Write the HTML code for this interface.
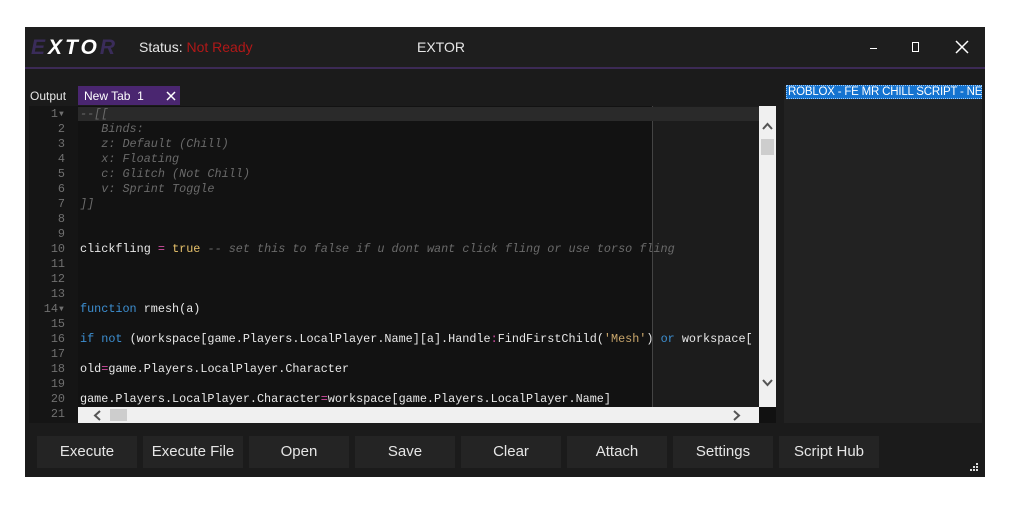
<!DOCTYPE html>
<html><head><style>
*{margin:0;padding:0;box-sizing:border-box}
body{width:1020px;height:523px;background:#fff;position:relative;overflow:hidden;font-family:"Liberation Sans",sans-serif}
.win{position:absolute;left:25px;top:27px;width:960px;height:450px;background:#1b1b1b}
.a{position:absolute}
.code{font-family:"Liberation Mono",monospace;font-size:11.8px;line-height:15px;white-space:pre;color:#e8e8e8}
.ln{position:absolute;left:0;width:40px;text-align:right;color:#707070}
.c{color:#6a6a6a;font-style:italic}
.k{color:#3d8fd1}
.t{color:#e6c06a}
.o{color:#d04ea0}
.s{color:#c9a66b}
.btn{position:absolute;top:409px;height:32px;width:100px;background:#242424;color:#e6e6e6;font-size:15px;text-align:center;line-height:32px}
</style></head><body>
<div class="win">
  <div class="a" style="left:0;top:0;width:960px;height:41px;background:#1e1e1e"></div>
  <div class="a" style="left:0;top:40px;width:960px;height:2px;background:#3c2a55"></div>
  <div class="a" style="left:6px;top:9px;font-size:21px;font-weight:bold;font-style:italic;letter-spacing:3px;color:#fff"><span style="color:#3a2c5a">E</span>XTO<span style="color:#3a2c5a">R</span></div>
  <div class="a" style="left:114px;top:12px;font-size:14px;color:#e6e6e6">Status: <span style="color:#b01818">Not Ready</span></div>
  <div class="a" style="left:392px;top:12px;font-size:14px;color:#e6e6e6">EXTOR</div>
  <div class="a" style="left:845px;top:21px;width:7px;height:1px;background:#fff"></div>
  <div class="a" style="left:887px;top:15px;width:7px;height:10px;border:1.5px solid #fff"></div>
  <svg class="a" style="left:930px;top:13px" width="14" height="14"><path d="M1 1L13 13M13 1L1 13" stroke="#fff" stroke-width="1.5"/></svg>

  <div class="a" style="left:5px;top:62px;font-size:12px;color:#e6e6e6">Output</div>
  <div class="a" style="left:53px;top:59px;width:102px;height:19px;background:#4a2670"></div>
  <div class="a" style="left:59px;top:62px;font-size:12px;color:#fff">New Tab&nbsp; 1</div>
  <svg class="a" style="left:141px;top:64px" width="10" height="10"><path d="M1 1L9 9M9 1L1 9" stroke="#fff" stroke-width="1.5"/></svg>

  <!-- editor -->
  <div class="a" style="left:4px;top:79px;width:49px;height:317px;background:#151515"></div>
  <div class="a" style="left:53px;top:79px;width:574px;height:301px;background:#121212"></div>
  <div class="a" style="left:627px;top:79px;width:107px;height:301px;background:#1c1c1c;border-left:1px solid #444"></div>
  <div class="a" style="left:53px;top:80px;width:681px;height:14px;background:#2a2a2a"></div>
  <div class="a" style="left:734px;top:79px;width:17px;height:301px;background:#f0f0f0"></div>
  <div class="a" style="left:736px;top:112px;width:13px;height:16px;background:#cdcdcd"></div>
  <svg class="a" style="left:737px;top:95px" width="11" height="8"><path d="M1 7L5.5 2L10 7" stroke="#555" stroke-width="2" fill="none"/></svg>
  <svg class="a" style="left:737px;top:352px" width="11" height="8"><path d="M1 1L5.5 6L10 1" stroke="#555" stroke-width="2" fill="none"/></svg>
  <div class="a" style="left:53px;top:380px;width:681px;height:16px;background:#f0f0f0"></div>
  <div class="a" style="left:85px;top:382px;width:17px;height:12px;background:#cdcdcd"></div>
  <svg class="a" style="left:68px;top:383px" width="8" height="11"><path d="M7 1L2 5.5L7 10" stroke="#555" stroke-width="2" fill="none"/></svg>
  <svg class="a" style="left:708px;top:383px" width="8" height="11"><path d="M1 1L6 5.5L1 10" stroke="#555" stroke-width="2" fill="none"/></svg>
  <div class="a" style="left:734px;top:380px;width:17px;height:16px;background:#111"></div>

  <div class="a code" style="left:0;top:80px;width:53px;height:316px;overflow:hidden">
<div class="ln" style="top:0">1▾</div><div class="ln" style="top:15px">2</div><div class="ln" style="top:30px">3</div><div class="ln" style="top:45px">4</div><div class="ln" style="top:60px">5</div><div class="ln" style="top:75px">6</div><div class="ln" style="top:90px">7</div><div class="ln" style="top:105px">8</div><div class="ln" style="top:120px">9</div><div class="ln" style="top:135px">10</div><div class="ln" style="top:150px">11</div><div class="ln" style="top:165px">12</div><div class="ln" style="top:180px">13</div><div class="ln" style="top:195px">14▾</div><div class="ln" style="top:210px">15</div><div class="ln" style="top:225px">16</div><div class="ln" style="top:240px">17</div><div class="ln" style="top:255px">18</div><div class="ln" style="top:270px">19</div><div class="ln" style="top:285px">20</div><div class="ln" style="top:300px">21</div></div>
  <div class="a code" style="left:55px;top:80px;width:679px;height:300px;overflow:hidden"><span class="c">--[[
   Binds:
   z: Default (Chill)
   x: Floating
   c: Glitch (Not Chill)
   v: Sprint Toggle
]]</span>


clickfling <span class="o">=</span> <span class="t">true</span> <span class="c">-- set this to false if u dont want click fling or use torso fling</span>



<span class="k">function</span> rmesh(a)

<span class="k">if not</span> (workspace[game.Players.LocalPlayer.Name][a].Handle<span class="o">:</span>FindFirstChild(<span class="s">'Mesh'</span>) <span class="k">or</span> workspace[

old<span class="o">=</span>game.Players.LocalPlayer.Character

game.Players.LocalPlayer.Character<span class="o">=</span>workspace[game.Players.LocalPlayer.Name]
</div>

  <!-- right panel -->
  <div class="a" style="left:759px;top:59px;width:198px;height:337px;background:#222"></div>
  <div class="a" style="left:761px;top:58px;width:196px;height:14px;background:#1473d0;border:1px dotted #9cf;color:#fff;font-size:11.5px;line-height:12px;white-space:nowrap;overflow:hidden;padding-left:1px;letter-spacing:-0.2px">ROBLOX - FE MR CHILL SCRIPT - NEE</div>

  <div class="btn" style="left:12px">Execute</div>
  <div class="btn" style="left:118px">Execute File</div>
  <div class="btn" style="left:224px">Open</div>
  <div class="btn" style="left:330px">Save</div>
  <div class="btn" style="left:436px">Clear</div>
  <div class="btn" style="left:542px">Attach</div>
  <div class="btn" style="left:648px">Settings</div>
  <div class="btn" style="left:754px">Script Hub</div>
  <svg class="a" style="left:944px;top:436px" width="10" height="10"><g fill="#ddd"><rect x="7" y="0" width="2" height="2"/><rect x="4" y="3" width="2" height="2"/><rect x="7" y="3" width="2" height="2"/><rect x="1" y="6" width="2" height="2"/><rect x="4" y="6" width="2" height="2"/><rect x="7" y="6" width="2" height="2"/></g></svg>
</div>
</body></html>
